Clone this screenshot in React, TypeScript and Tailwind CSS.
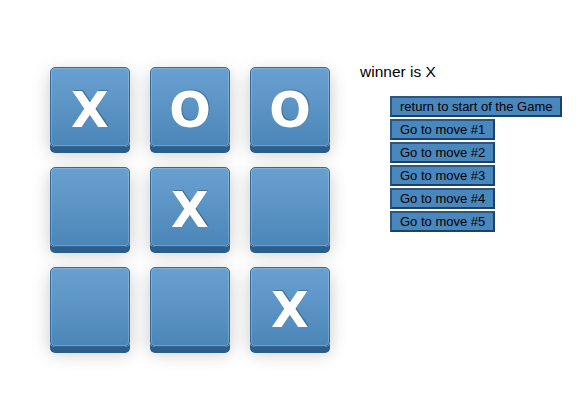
import React from 'react';

const squares = ['X', 'O', 'O', null, 'X', null, null, null, 'X'];
const moves = ['return to start of the Game', 'Go to move #1', 'Go to move #2', 'Go to move #3', 'Go to move #4', 'Go to move #5'];

function Square({ value }: { value: string | null }) {
  return (
    <button className="w-[80px] h-[80px] pt-[6px] rounded-[5px] border border-[#34699a] bg-gradient-to-b from-[#68a1d1] to-[#4c86b8] shadow-[inset_0_0_0_1px_rgba(255,255,255,0.18),0_6px_0_#2b5e8a,0_6px_18px_rgba(0,0,0,0.22)] flex items-center justify-center text-white text-[49px] font-bold leading-none [font-family:'DejaVu_Sans',sans-serif] [text-shadow:1px_-1px_0_rgba(0,0,0,0.25)]">
      {value}
    </button>
  );
}

export default function App() {
  return (
    <div className="flex items-start bg-white h-[415px] w-[584px] pl-[50px] pt-[67px] [font-family:'Liberation_Sans',Arial,sans-serif]">
      {/* Board */}
      <div className="grid grid-cols-3 gap-[20px]">
        {squares.map((s, i) => (
          <Square key={i} value={s} />
        ))}
      </div>

      {/* Game info */}
      <div className="ml-[30px] -mt-[7px]">
        <div className="text-[15.5px] text-black">winner is X</div>
        <ol className="pl-[30px] mt-[13px] flex flex-col gap-[2px]">
          {moves.map((m) => (
            <li key={m} className="flex">
              <button className="h-[21px] px-[8px] bg-[#4a87bc] border-2 border-t-[#2a5680] border-l-[#2a5680] border-r-[#1c4267] border-b-[#1c4267] text-[13px] text-black leading-none">
                {m}
              </button>
            </li>
          ))}
        </ol>
      </div>
    </div>
  );
}
